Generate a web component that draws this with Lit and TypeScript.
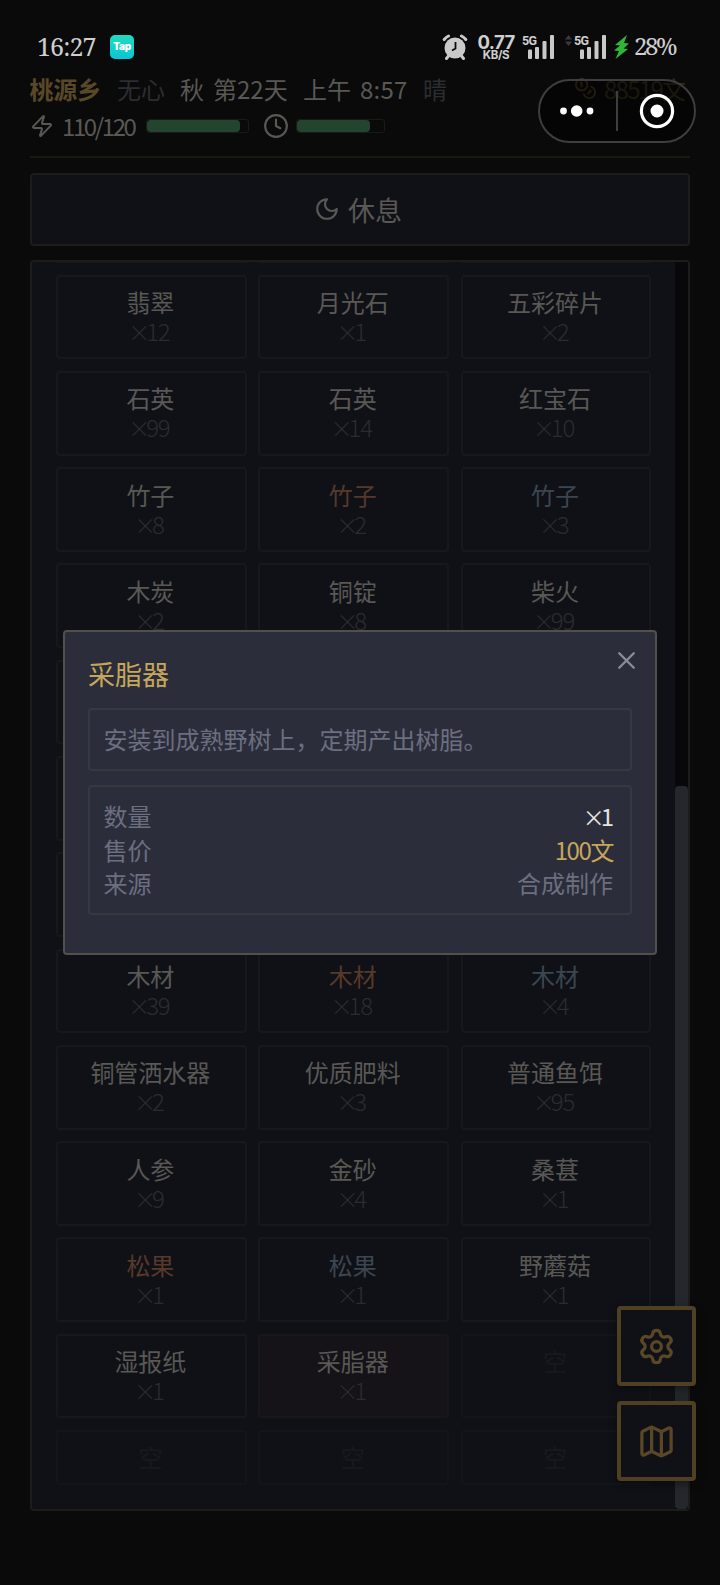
import { LitElement, html, css, svg } from "lit";
import { customElement, property } from "lit/decorators.js";

const ICONS: Record<string, unknown> = {
  zap: svg`<path d="M4 14a1 1 0 0 1-.78-1.63l9.9-10.2a.5.5 0 0 1 .86.46l-1.92 6.02A1 1 0 0 0 13 10h7a1 1 0 0 1 .78 1.63l-9.9 10.2a.5.5 0 0 1-.86-.46l1.92-6.02A1 1 0 0 0 11 14z"/>`,
  clock: svg`<circle cx="12" cy="12" r="10"/><path d="M12 6v6l4 2"/>`,
  moon: svg`<path d="M12 3a6 6 0 0 0 9 9 9 9 0 1 1-9-9z"/>`,
  coins: svg`<circle cx="8" cy="8" r="6"/><path d="M18.09 10.37A6 6 0 1 1 10.34 18M7 6h1v4M16.71 13.88l.7.71-2.82 2.82"/>`,
  close: svg`<path d="M18 6 6 18M6 6l12 12"/>`,
  settings: svg`<path d="M9.671 4.136a2.34 2.34 0 0 1 4.659 0 2.34 2.34 0 0 0 3.319 1.915 2.34 2.34 0 0 1 2.33 4.033 2.34 2.34 0 0 0 0 3.831 2.34 2.34 0 0 1-2.33 4.033 2.34 2.34 0 0 0-3.319 1.915 2.34 2.34 0 0 1-4.659 0 2.34 2.34 0 0 0-3.32-1.915 2.34 2.34 0 0 1-2.33-4.033 2.34 2.34 0 0 0 0-3.831A2.34 2.34 0 0 1 6.35 6.051a2.34 2.34 0 0 0 3.319-1.915"/><circle cx="12" cy="12" r="3"/>`,
  map: svg`<path d="M14.106 5.553a2 2 0 0 0 1.788 0l3.659-1.83A1 1 0 0 1 21 4.619v12.764a1 1 0 0 1-.553.894l-4.553 2.277a2 2 0 0 1-1.788 0l-4.212-2.106a2 2 0 0 0-1.788 0l-3.659 1.83A1 1 0 0 1 3 19.381V6.618a1 1 0 0 1 .553-.894l4.553-2.277a2 2 0 0 1 1.788 0zM15 5.764v15M9 3.236v15"/>`,
};

@customElement("line-icon")
class LineIcon extends LitElement {
  @property() name = "";
  static styles = css`
    :host { display: inline-flex; flex: none; }
    svg { width: 100%; height: 100%; fill: none; stroke: currentColor; stroke-width: 2; stroke-linecap: round; stroke-linejoin: round; }
  `;
  render() {
    return html`<svg viewBox="0 0 24 24">${ICONS[this.name]}</svg>`;
  }
}

@customElement("signal-bars")
class SignalBars extends LitElement {
  static styles = css`
    :host { display: block; position: relative; width: 32px; height: 26px; }
    svg { display: block; }
    span { position: absolute; left: 0; top: 0; font: 700 12.5px/13px Roboto, sans-serif; letter-spacing: -.6px; color: #cfcfcf; }
  `;
  render() {
    return html`<svg width="32" height="26" viewBox="0 0 32 26" fill="#c9c9c9">
        <rect x="6" y="15.500" width="4" height="9.500" rx="1"/><rect x="13" y="13" width="4" height="12" rx="1"/>
        <rect x="20.500" y="7" width="4" height="18" rx="1"/><rect x="28" y="1" width="4" height="24" rx="1"/>
      </svg><span>5G</span>`;
  }
}

type Item = { name?: string; count?: number; tone?: string; empty?: boolean };
const it = (name: string, count: number, tone = ""): Item => ({ name, count, tone });
const none: Item = { empty: true };

const ROWS: Item[][] = [
  [it("翡翠", 12), it("月光石", 1), it("五彩碎片", 2)],
  [it("石英", 99), it("石英", 14), it("红宝石", 10)],
  [it("竹子", 8), it("竹子", 2, "fine"), it("竹子", 3, "rare")],
  [it("木炭", 2), it("铜锭", 8), it("柴火", 99)],
  [{}, {}, {}],
  [{}, {}, {}],
  [{}, {}, {}],
  [it("木材", 39), it("木材", 18, "fine"), it("木材", 4, "rare")],
  [it("铜管洒水器", 2), it("优质肥料", 3), it("普通鱼饵", 95)],
  [it("人参", 9), it("金砂", 4), it("桑葚", 1)],
  [it("松果", 1, "fine"), it("松果", 1, "rare"), it("野蘑菇", 1)],
  [it("湿报纸", 1), it("采脂器", 1, "picked"), none],
  [none, none, none],
];

@customElement("app-root")
class AppRoot extends LitElement {
  static styles = css`
    :host {
      display: block; position: relative; width: 720px; height: 1585px; overflow: hidden;
      background: #0a0a0a; color: #595855;
      font: 24px/29px "Noto Sans CJK SC", sans-serif;
    }
    * { box-sizing: border-box; }
    .status { display: flex; height: 54px; margin-top: 20px; padding: 0 44px 0 37px; align-items: center; color: #cfcfcf; }
    .serif { font: 25px/30px "Noto Serif", "Liberation Serif", serif; }
    .time { width: 56px; margin: -2px 17px 0 0; white-space: nowrap; letter-spacing: -.9px; }
    .tap { width: 24px; height: 24px; border-radius: 5px; background: linear-gradient(#1fdcc0, #0cc5d6); color: #fff; font: 900 10px/23px Inter, sans-serif; text-align: center; letter-spacing: -.3px; }
    .push { flex: 1; }
    .alarm { margin-right: 9px; }
    .rate { width: 38px; margin-right: 7px; font: 700 18.5px/15px Inter, sans-serif; text-align: center; letter-spacing: -.6px; white-space: nowrap; }
    .rate small { display: block; font-size: 11.5px; line-height: 10px; letter-spacing: -.3px; }
    .updown { margin: -14px 2px 0 11px; }
    .bolt { margin: 0 5px 0 8px; }
    .pct { width: 40px; margin: -2px 2px 0 0; font-size: 24px; white-space: nowrap; letter-spacing: -2.4px; }

    .head { display: flex; height: 31px; margin: -1px 31px 1px 29.5px; align-items: center; white-space: nowrap; }
    .brand { width: 87.5px; font-weight: 700; color: #594826; letter-spacing: -.3px; }
    .dim { color: #2c2d31; }
    .who { width: 63px; }
    .season { width: 33px; }
    .day { width: 90px; }
    .noon { width: 57px; }
    .clock { width: 63px; letter-spacing: .2px; }
    .coins { width: 23px; height: 23px; margin: 0 7px 0 0; color: #3c311a; }
    .money { width: 85px; color: #332a18; letter-spacing: -1.7px; }
    .meters { display: flex; height: 53px; margin: 0 30px; padding-bottom: 9px; align-items: center; border-bottom: 2px solid #181711; }
    .zap { width: 24px; height: 24px; margin-right: 8px; }
    .hp { width: 84px; margin-top: -2px; letter-spacing: -2.4px; }
    .bar { width: 103px; height: 14px; border: 1px solid #191b17; border-radius: 3px; }
    .bar.short { width: 89px; }
    .fill { height: 100%; border-radius: 4px; background: #234530; }
    .cl { width: 26px; height: 26px; margin: 0 6.5px 0 14px; }

    .rest { display: flex; justify-content: center; align-items: center; gap: 10px; height: 73px; margin: 15px 30px 0 30px; padding: 0 4px 1px 0; border: 2px solid #1d1c1b; border-radius: 4px; background: #101117; font-size: 27px; }
    .rest line-icon { width: 26px; height: 26px; margin-right: -2px; }
    .bag { display: flex; height: 1251px; margin: 14px 30px 0 30px; border: 2px solid #1d1c1b; border-radius: 4px; background: #101117; overflow: hidden; }
    .list { flex: 1; display: flex; flex-direction: column; gap: 11.6px; padding: 0 23.5px 0 24px; }
    .row { display: grid; grid-template-columns: repeat(3, 1fr); gap: 11.6px; height: 84.7px; flex: none; }
    .row.last { height: 55px; }
    .row.edge { height: 1px; }
    .edge i { background: #1a1918; }
    .cell { border: 2px solid #17181c; border-radius: 4px; padding: 10.5px 2px 0 0; text-align: center; white-space: nowrap; }
    .empty { color: #18191d; border-color: #141519; }
    .picked { background: #151318; }
    .fine .n { color: #57392a; }
    .rare .n { color: #3b4651; }
    .c { height: 29px; color: #2b2c31; letter-spacing: -1.2px; font-weight: 300; }
    .times { font-size: 22px; line-height: 20px; margin: 0 -3px 0 -3px; }
    .track { width: 13px; display: flex; flex-direction: column; justify-content: flex-end; background: #08080a; }
    .thumb { height: 723px; border-radius: 4px; background: #24272b; }

    .capsule { position: absolute; left: 538px; top: 79px; width: 158px; height: 64px; border: 2px solid #3e3e3e; border-radius: 32px; background: rgba(0, 0, 0, .45); }
    .capsule svg { display: block; }
    .modal { position: absolute; left: 63px; top: 630px; width: 594px; height: 325px; padding: 28px 23px 0; border: 2px solid #53504c; border-radius: 4px; background: #2b2d3b; color: #6b6f80; }
    .title { height: 29px; margin: -2px 0 21px; font-size: 27px; line-height: 31px; color: #c6a65b; }
    .x { position: absolute; right: 14px; top: 14px; width: 29px; height: 29px; color: #888b98; }
    .x line-icon { width: 29px; height: 29px; }
    .box { border: 2px solid #373941; border-radius: 4px; padding: 0 13.5px; }
    .desc { height: 63px; line-height: 57px; margin-bottom: 14px; white-space: nowrap; }
    .facts { height: 130px; padding-top: 12px; padding-right: 17px; }
    .fact { display: flex; justify-content: space-between; height: 33.5px; line-height: 33.5px; }
    .white { color: #e4e4e0; letter-spacing: -1px; }
    .gold { color: #c6a65b; letter-spacing: -1.4px; }
    .fab { position: absolute; left: 617px; width: 79px; height: 80px; display: flex; align-items: center; justify-content: center; border: 4px solid #4f4023; border-radius: 4px; background: #101117; color: #594725; box-shadow: 0 3px 8px rgba(0, 0, 0, .4); }
    .fab line-icon { width: 39px; height: 39px; }
    .gear { top: 1306px; }
    .map { top: 1401px; }
  `;

  private cell(i: Item) {
    if (i.empty) return html`<div class="cell empty">空</div>`;
    return html`<div class="cell ${i.tone ?? ""}">
      ${i.name ? html`<div class="n">${i.name}</div><div class="c"><span class="times">×</span>${i.count}</div>` : ""}
    </div>`;
  }

  render() {
    return html`
      <div class="status">
        <span class="serif time">16:27</span><span class="tap">Tap</span><span class="push"></span>
        <svg class="alarm" width="26" height="26" viewBox="0 0 26 26">
          <circle cx="13" cy="14" r="10.500" fill="#cacaca"/>
          <path d="M2.200 5.500A13 13 0 0 1 6.500 2M19.500 2a13 13 0 0 1 4.300 3.500M6.500 22l-2 2.500M19.500 22l2 2.500" stroke="#cacaca" stroke-width="3" stroke-linecap="round" fill="none"/>
          <path d="M13.500 8v6.500l-3.500 2" stroke="#0a0a0a" stroke-width="1.800" fill="none"/>
        </svg>
        <span class="rate">0.77<small>KB/S</small></span>
        <signal-bars></signal-bars>
        <svg class="updown" width="7" height="11" viewBox="0 0 7 11" fill="#3a3a3a"><path d="M0 4.500 3.500 0 7 4.500zM0 6.500h7L3.500 11z"/></svg>
        <signal-bars></signal-bars>
        <svg class="bolt" width="15" height="24" viewBox="0 0 15 24" fill="#2fb838"><path d="M13 0 1 10l5 .500L0 15.500l5 .500L1.500 24 14 14l-4.500-.500L15 8.500l-5-.500z"/></svg>
        <span class="serif pct">28%</span>
      </div>
      <div class="head">
        <span class="brand">桃源乡</span><span class="who dim">无心</span><span class="season">秋</span>
        <span class="day">第22天</span><span class="noon">上午</span><span class="clock">8:57</span><span class="dim">晴</span>
        <span class="push"></span><line-icon class="coins" name="coins"></line-icon><span class="money">88519文</span>
      </div>
      <div class="meters">
        <line-icon class="zap" name="zap"></line-icon><span class="hp">110/120</span>
        <div class="bar"><div class="fill" style="width:92%"></div></div>
        <line-icon class="cl" name="clock"></line-icon>
        <div class="bar short"><div class="fill" style="width:84%"></div></div>
      </div>
      <div class="rest"><line-icon name="moon"></line-icon>休息</div>
      <div class="bag">
        <div class="list">
          <div class="row edge"><i></i><i></i><i></i></div>
          ${ROWS.map((r, k) => html`<div class="row ${k === ROWS.length - 1 ? "last" : ""}">${r.map((i) => this.cell(i))}</div>`)}
        </div>
        <div class="track"><div class="thumb"></div></div>
      </div>

      <div class="capsule">
        <svg width="154" height="60" viewBox="0 0 154 60" fill="#fff">
          <circle cx="23.500" cy="30" r="3.400"/><circle cx="36.700" cy="30" r="5.800"/><circle cx="50" cy="30" r="3.400"/>
          <rect x="76" y="10" width="2" height="40" fill="#3e3e3e"/>
          <circle cx="117" cy="30" r="15.600" fill="none" stroke="#fff" stroke-width="3.200"/><circle cx="117" cy="30" r="6.500"/>
        </svg>
      </div>
      <div class="fab gear"><line-icon name="settings"></line-icon></div>
      <div class="fab map"><line-icon name="map"></line-icon></div>
      <div class="modal">
        <div class="title">采脂器</div>
        <div class="x"><line-icon name="close"></line-icon></div>
        <div class="box desc">安装到成熟野树上，定期产出树脂。</div>
        <div class="box facts">
          <div class="fact"><span>数量</span><span class="white"><span class="times">×</span>1</span></div>
          <div class="fact"><span>售价</span><span class="gold">100文</span></div>
          <div class="fact"><span>来源</span><span>合成制作</span></div>
        </div>
      </div>
    `;
  }
}
